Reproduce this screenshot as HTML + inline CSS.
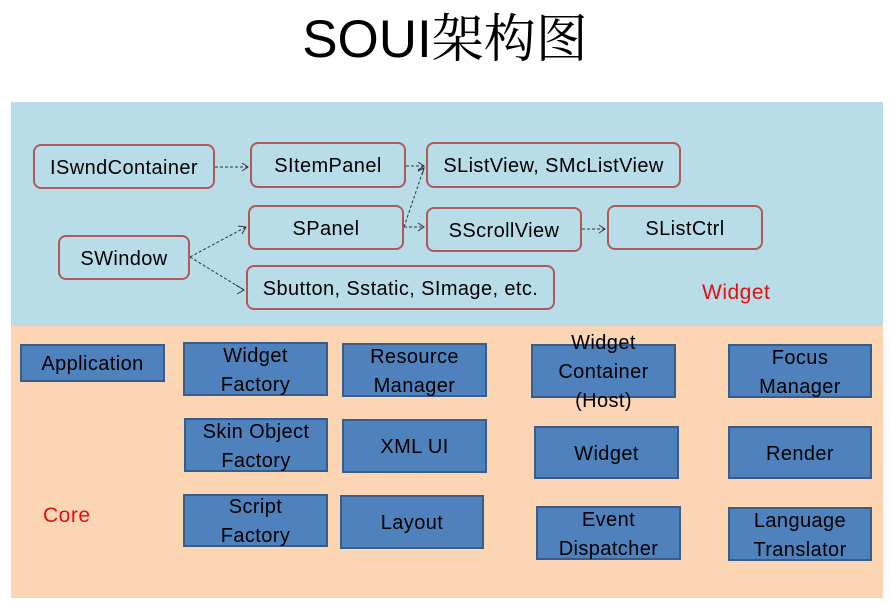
<!DOCTYPE html>
<html><head><meta charset="utf-8"><style>
body{margin:0;width:890px;height:605px;background:#fff;position:relative;overflow:hidden;font-family:"Liberation Sans","Noto Sans CJK SC",sans-serif}
.t{position:absolute;left:0;width:890px;top:-2px;text-align:center;font-size:53px;line-height:74px;color:#000}
.t span{font-family:"Noto Serif CJK SC",serif;font-size:52px}
.b{position:absolute;box-sizing:border-box;display:flex;align-items:center;justify-content:center;text-align:center;font-size:20px;line-height:29px;color:#000;white-space:nowrap;letter-spacing:0.4px;padding-top:3px}
.r{border:2px solid #b05a57;border-radius:8px;background:#b8dde8}
.c{border:2px solid #385d8a;background:#4f81bd}
.lab{position:absolute;color:#e01010;font-size:21px;letter-spacing:0.5px}
</style></head><body>
<div class="t">SOUI<span>架构图</span></div>
<div style="position:absolute;left:11px;top:102px;width:872px;height:224px;background:#b8dde8"></div>
<div style="position:absolute;left:11px;top:326px;width:872px;height:272px;background:#fcd5b5"></div>
<svg style="position:absolute;left:0;top:0" width="890" height="605" stroke="#333" fill="none" stroke-width="1">
<g stroke-dasharray="3,2">
<path d="M215 167H248M406 166H424M404 227H424M404 227L424 168M582 229H605M190 257L246 227M190 257L244 290"/>
</g>
<path d="M242 163L248 167L242 171M418 162L424 166L418 170M418 223L424 227L418 231M599 225L605 229L599 233M418 171L424 168L422 175M238 226L246 227L242 234M236 285L244 290L237 294"/>
</svg>
<div class="b r" style="left:33px;top:144px;width:182px;height:45px">ISwndContainer</div>
<div class="b r" style="left:250px;top:142px;width:156px;height:46px">SItemPanel</div>
<div class="b r" style="left:426px;top:142px;width:255px;height:46px">SListView, SMcListView</div>
<div class="b r" style="left:248px;top:205px;width:156px;height:45px">SPanel</div>
<div class="b r" style="left:426px;top:207px;width:156px;height:45px">SScrollView</div>
<div class="b r" style="left:607px;top:205px;width:156px;height:45px">SListCtrl</div>
<div class="b r" style="left:58px;top:235px;width:132px;height:45px">SWindow</div>
<div class="b r" style="left:246px;top:265px;width:309px;height:45px">Sbutton, Sstatic, SImage, etc.</div>
<div class="lab" style="left:702px;top:281px">Widget</div>
<div class="lab" style="left:43px;top:504px">Core</div>
<div class="b c" style="left:20px;top:344px;width:145px;height:38px">Application</div>
<div class="b c" style="left:183px;top:342px;width:145px;height:54px">Widget<br>Factory</div>
<div class="b c" style="left:342px;top:343px;width:145px;height:54px">Resource<br>Manager</div>
<div class="b c" style="left:184px;top:418px;width:144px;height:54px">Skin Object<br>Factory</div>
<div class="b c" style="left:342px;top:419px;width:145px;height:54px">XML UI</div>
<div class="b c" style="left:183px;top:494px;width:145px;height:53px">Script<br>Factory</div>
<div class="b c" style="left:340px;top:495px;width:144px;height:54px">Layout</div>
<div class="b c" style="left:531px;top:344px;width:145px;height:54px;overflow:visible">Widget<br>Container<br>(Host)</div>
<div class="b c" style="left:728px;top:344px;width:144px;height:54px">Focus<br>Manager</div>
<div class="b c" style="left:534px;top:426px;width:145px;height:53px">Widget</div>
<div class="b c" style="left:728px;top:426px;width:144px;height:53px">Render</div>
<div class="b c" style="left:536px;top:506px;width:145px;height:54px">Event<br>Dispatcher</div>
<div class="b c" style="left:728px;top:507px;width:144px;height:54px">Language<br>Translator</div>
</body></html>
